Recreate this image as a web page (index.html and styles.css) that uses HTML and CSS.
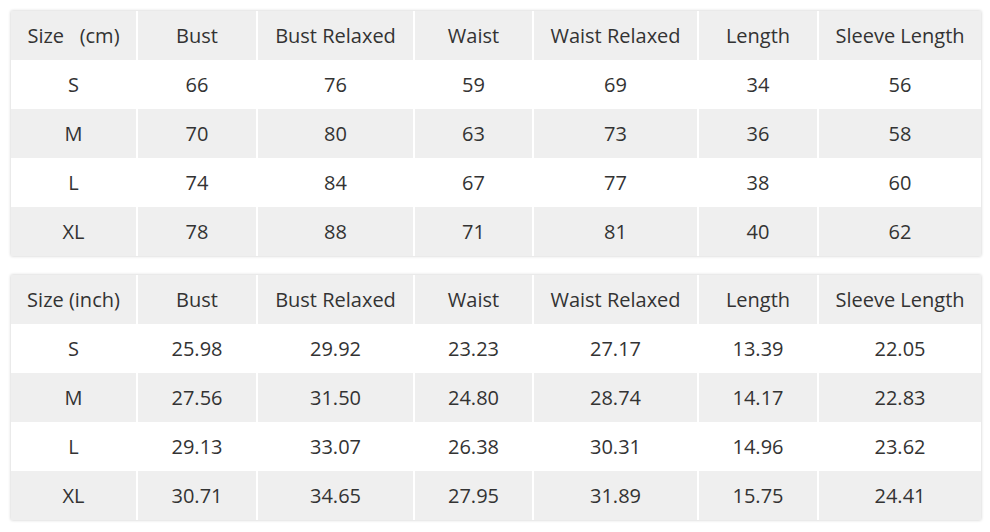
FILE: index.html
```html
<!DOCTYPE html>
<html lang="en">
<head>
<meta charset="utf-8">
<title>Size Chart</title>
<link rel="stylesheet" href="styles.css">
</head>
<body>
<div class="chart">
  <div class="row head"><div>Size&nbsp;&nbsp;&nbsp;(cm)</div><div>Bust</div><div>Bust Relaxed</div><div>Waist</div><div>Waist Relaxed</div><div>Length</div><div>Sleeve Length</div></div>
  <div class="row"><div>S</div><div>66</div><div>76</div><div>59</div><div>69</div><div>34</div><div>56</div></div>
  <div class="row alt"><div>M</div><div>70</div><div>80</div><div>63</div><div>73</div><div>36</div><div>58</div></div>
  <div class="row"><div>L</div><div>74</div><div>84</div><div>67</div><div>77</div><div>38</div><div>60</div></div>
  <div class="row alt"><div>XL</div><div>78</div><div>88</div><div>71</div><div>81</div><div>40</div><div>62</div></div>
</div>
<div class="chart">
  <div class="row head"><div>Size (inch)</div><div>Bust</div><div>Bust Relaxed</div><div>Waist</div><div>Waist Relaxed</div><div>Length</div><div>Sleeve Length</div></div>
  <div class="row"><div>S</div><div>25.98</div><div>29.92</div><div>23.23</div><div>27.17</div><div>13.39</div><div>22.05</div></div>
  <div class="row alt"><div>M</div><div>27.56</div><div>31.50</div><div>24.80</div><div>28.74</div><div>14.17</div><div>22.83</div></div>
  <div class="row"><div>L</div><div>29.13</div><div>33.07</div><div>26.38</div><div>30.31</div><div>14.96</div><div>23.62</div></div>
  <div class="row alt"><div>XL</div><div>30.71</div><div>34.65</div><div>27.95</div><div>31.89</div><div>15.75</div><div>24.41</div></div>
</div>
</body>
</html>
```
FILE: styles.css
```css
html, body {
  margin: 0;
  background: #fff;
}
body {
  padding: 11px;
  display: flex;
  flex-direction: column;
  gap: 19px;
  font-family: "Open Sans", "Liberation Sans", sans-serif;
  font-size: 20px;
  color: #333;
}
.chart {
  width: 970px;
  background: #fff;
  box-shadow: 0 0 3px rgba(0, 0, 0, 0.22);
}
.row {
  display: grid;
  grid-template-columns: 125px 118px 155px 117px 163px 118px 162px;
  column-gap: 2px;
  height: 49px;
}
.row > div {
  display: flex;
  align-items: center;
  justify-content: center;
  white-space: nowrap;
}
.head > div,
.alt > div {
  background: #efefef;
}
```
